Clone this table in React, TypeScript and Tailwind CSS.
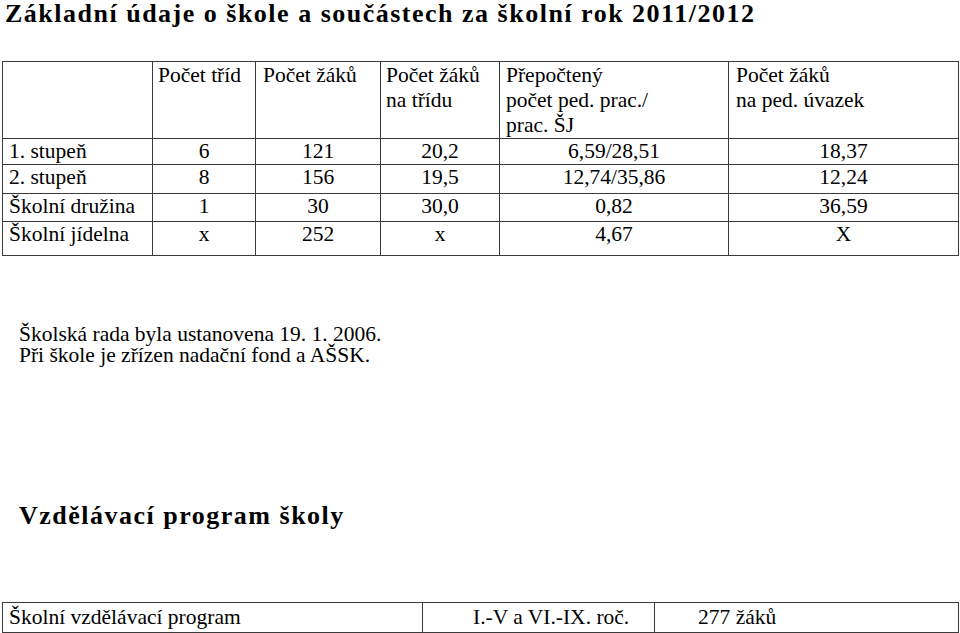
const SERIF = "font-['Liberation_Serif','Times_New_Roman',serif]"

type Row = {
  label: string
  cells: string[]
  h: string
}

const ROWS: Row[] = [
  { label: '1. stupeň', cells: ['6', '121', '20,2', '6,59/28,51', '18,37'], h: 'h-[26px]' },
  { label: '2. stupeň', cells: ['8', '156', '19,5', '12,74/35,86', '12,24'], h: 'h-[29px]' },
  { label: 'Školní družina', cells: ['1', '30', '30,0', '0,82', '36,59'], h: 'h-[28px]' },
  { label: 'Školní jídelna', cells: ['x', '252', 'x', '4,67', 'X'], h: 'h-[34px]' },
]

const CELL = 'border border-[#3a3a3a] p-0'

export default function App() {
  return (
    <div className={`${SERIF} h-[633px] w-[960px] overflow-hidden bg-white text-black`}>
      <h1 className="pl-[5px] pt-[1px] text-[26px] font-bold leading-[26px] tracking-[1.5px]">
        Základní údaje o škole a součástech za školní rok 2011/2012
      </h1>

      <table className="ml-[2px] mt-[34px] w-[956px] table-fixed border-collapse text-[21.5px] leading-[25px]">
        <colgroup>
          <col className="w-[150px]" />
          <col className="w-[103px]" />
          <col className="w-[125px]" />
          <col className="w-[119px]" />
          <col className="w-[229px]" />
          <col className="w-[230px]" />
        </colgroup>
        <thead>
          <tr className="h-[76px] align-top">
            <th className={`${CELL} font-normal`} />
            <th className={`${CELL} pl-[5px] pt-[1px] text-left font-normal`}>Počet tříd</th>
            <th className={`${CELL} pl-[7px] pt-[1px] text-left font-normal`}>Počet žáků</th>
            <th className={`${CELL} pl-[5px] pt-[1px] text-left font-normal`}>
              Počet žáků
              <br />
              na třídu
            </th>
            <th className={`${CELL} pl-[6px] pt-[1px] text-left font-normal`}>
              Přepočtený
              <br />
              počet ped. prac./
              <br />
              prac. ŠJ
            </th>
            <th className={`${CELL} pl-[7px] pt-[1px] text-left font-normal`}>
              Počet žáků
              <br />
              na ped. úvazek
            </th>
          </tr>
        </thead>
        <tbody>
          {ROWS.map((row) => (
            <tr key={row.label} className={`${row.h} align-top`}>
              <td className={`${CELL} whitespace-nowrap pl-[6px]`}>{row.label}</td>
              {row.cells.map((cell, i) => (
                <td key={i} className={`${CELL} text-center`}>
                  {cell}
                </td>
              ))}
            </tr>
          ))}
        </tbody>
      </table>

      <div className="mt-[68px] pl-[19px] text-[21.5px] leading-[20.5px]">
        <p>Školská rada byla ustanovena 19. 1. 2006.</p>
        <p>Při škole je zřízen nadační fond a AŠSK.</p>
      </div>

      <h2 className="mt-[138px] pl-[19px] text-[26px] font-bold leading-[26px] tracking-[1.5px]">
        Vzdělávací program školy
      </h2>

      <table className="ml-[2px] mt-[73px] w-[956px] table-fixed border-collapse text-[21.5px] leading-[25px]">
        <colgroup>
          <col className="w-[420px]" />
          <col className="w-[232px]" />
          <col className="w-[304px]" />
        </colgroup>
        <tbody>
          <tr className="h-[30px] align-top">
            <td className={`${CELL} pl-[6px] pt-[2px]`}>Školní vzdělávací program</td>
            <td className={`${CELL} pl-[50px] pt-[2px]`}>I.-V a VI.-IX. roč.</td>
            <td className={`${CELL} pl-[43px] pt-[2px]`}>277 žáků</td>
          </tr>
        </tbody>
      </table>
    </div>
  )
}
